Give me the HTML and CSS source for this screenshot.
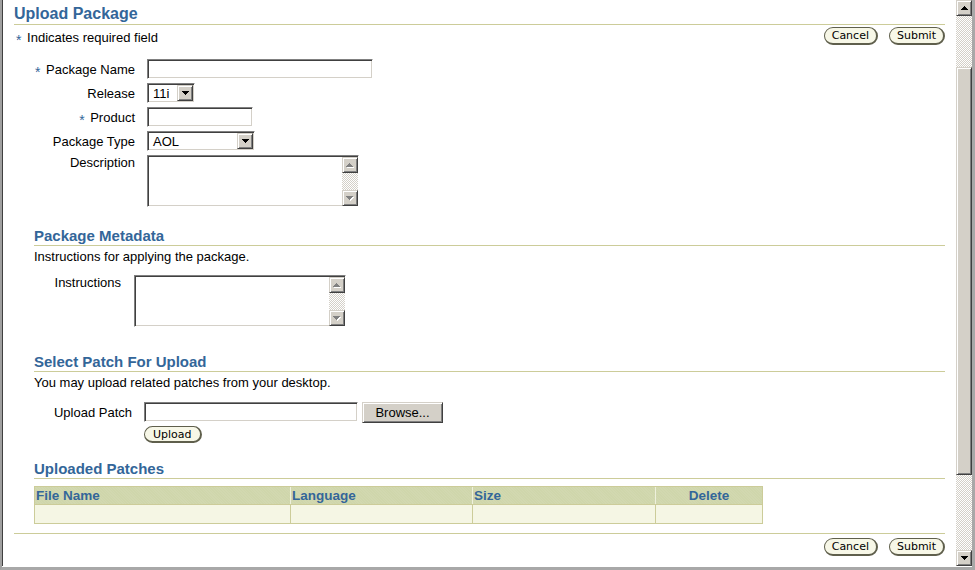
FILE: index.html
```html
<!DOCTYPE html>
<html lang="en">
<head>
<meta charset="utf-8">
<title>Upload Package</title>
<link rel="stylesheet" href="styles.css">
</head>
<body>
<div class="frame">
  <div class="viewport">
    <div class="page">
      <h1 class="page-title">Upload Package</h1>
      <div class="req-row">
        <p class="req-note"><span class="req">*</span> Indicates required field</p>
        <div class="btn-group">
          <button class="pill" type="button">Cancel</button>
          <button class="pill" type="button">Submit</button>
        </div>
      </div>

      <div class="form main-form">
        <label class="lbl"><span class="req">*</span> Package Name</label>
        <input class="field w-name" type="text">

        <label class="lbl">Release</label>
        <div class="select w-release">
          <span class="sel-val">11i</span>
          <span class="raised sel-btn"><svg class="ar" width="7" height="4" viewBox="0 0 7 4"><path d="M0 0h7v1H0zM1 1h5v1H1zM2 2h3v1H2zM3 3h1v1H3z"/></svg></span>
        </div>

        <label class="lbl"><span class="req">*</span> Product</label>
        <input class="field w-product" type="text">

        <label class="lbl">Package Type</label>
        <div class="select w-type">
          <span class="sel-val">AOL</span>
          <span class="raised sel-btn"><svg class="ar" width="7" height="4" viewBox="0 0 7 4"><path d="M0 0h7v1H0zM1 1h5v1H1zM2 2h3v1H2zM3 3h1v1H3z"/></svg></span>
        </div>

        <label class="lbl lbl-top">Description</label>
        <div class="textarea">
          <div class="ta-scroll">
            <span class="raised ta-btn"><svg class="ar-dis" width="8" height="5" viewBox="0 0 8 5"><path fill="#fff" d="M4 1h1v1H4zM3 2h3v1H3zM2 3h5v1H2zM1 4h7v1H1z"/><path fill="#808080" d="M3 0h1v1H3zM2 1h3v1H2zM1 2h5v1H1zM0 3h7v1H0z"/></svg></span>
            <span class="raised ta-btn"><svg class="ar-dis" width="8" height="5" viewBox="0 0 8 5"><path fill="#fff" d="M1 1h7v1H1zM2 2h5v1H2zM3 3h3v1H3zM4 4h1v1H4z"/><path fill="#808080" d="M0 0h7v1H0zM1 1h5v1H1zM2 2h3v1H2zM3 3h1v1H3z"/></svg></span>
          </div>
        </div>
      </div>

      <section class="sub sub-meta">
        <h2 class="sub-title">Package Metadata</h2>
        <p class="sub-desc">Instructions for applying the package.</p>
        <div class="form meta-form">
          <label class="lbl lbl-top">Instructions</label>
          <div class="textarea">
            <div class="ta-scroll">
              <span class="raised ta-btn"><svg class="ar-dis" width="8" height="5" viewBox="0 0 8 5"><path fill="#fff" d="M4 1h1v1H4zM3 2h3v1H3zM2 3h5v1H2zM1 4h7v1H1z"/><path fill="#808080" d="M3 0h1v1H3zM2 1h3v1H2zM1 2h5v1H1zM0 3h7v1H0z"/></svg></span>
              <span class="raised ta-btn"><svg class="ar-dis" width="8" height="5" viewBox="0 0 8 5"><path fill="#fff" d="M1 1h7v1H1zM2 2h5v1H2zM3 3h3v1H3zM4 4h1v1H4z"/><path fill="#808080" d="M0 0h7v1H0zM1 1h5v1H1zM2 2h3v1H2zM3 3h1v1H3z"/></svg></span>
            </div>
          </div>
        </div>
      </section>

      <section class="sub sub-patch">
        <h2 class="sub-title">Select Patch For Upload</h2>
        <p class="sub-desc">You may upload related patches from your desktop.</p>
        <div class="form upload-form">
          <label class="lbl">Upload Patch</label>
          <div class="upload-cell">
            <div class="upload-line">
              <input class="field w-file" type="text">
              <button class="raised win-btn" type="button">Browse...</button>
            </div>
            <button class="pill pill-sm" type="button">Upload</button>
          </div>
        </div>
      </section>

      <section class="sub sub-uploaded">
        <h2 class="sub-title">Uploaded Patches</h2>
        <table class="patches">
          <colgroup>
            <col class="c-file"><col class="c-lang"><col class="c-size"><col class="c-del">
          </colgroup>
          <thead>
            <tr><th>File Name</th><th>Language</th><th>Size</th><th class="center">Delete</th></tr>
          </thead>
          <tbody>
            <tr><td></td><td></td><td></td><td></td></tr>
          </tbody>
        </table>
      </section>

      <div class="page-foot">
        <div class="btn-group">
          <button class="pill" type="button">Cancel</button>
          <button class="pill" type="button">Submit</button>
        </div>
      </div>
    </div>
  </div>

  <div class="vscroll">
    <span class="raised sb-btn"><svg class="ar" width="7" height="4" viewBox="0 0 7 4"><path d="M3 0h1v1H3zM2 1h3v1H2zM1 2h5v1H1zM0 3h7v1H0z"/></svg></span>
    <div class="sb-track"><div class="raised sb-thumb"></div></div>
    <span class="raised sb-btn"><svg class="ar" width="7" height="4" viewBox="0 0 7 4"><path d="M0 0h7v1H0zM1 1h5v1H1zM2 2h3v1H2zM3 3h1v1H3z"/></svg></span>
  </div>
</div>
</body>
</html>
```

FILE: styles.css
```css
html, body {
  margin: 0;
  padding: 0;
  background: #fff;
}
body {
  font-family: "Liberation Sans", Arial, sans-serif;
  font-size: 13px;
  color: #000;
}

/* window frame */
.frame {
  display: flex;
  width: 975px;
  height: 570px;
  box-sizing: border-box;
  border-left: 2px solid #a0a0a0;
  border-right: 3px solid #a8a8a8;
  border-bottom: 3px solid #a8a8a8;
  padding-bottom: 1px;
  background: #fff;
  overflow: hidden;
}
.viewport {
  flex: 1;
  min-width: 0;
  border-left: 1px solid #404040;
  overflow: hidden;
}
.page {
  padding: 0 11px;
}

/* generic raised (Windows classic) */
.raised {
  box-sizing: border-box;
  background: #d4d0c8;
  border: 1px solid;
  border-color: #d4d0c8 #404040 #404040 #d4d0c8;
  box-shadow: inset 1px 1px #fff, inset -1px -1px #808080;
  display: flex;
  align-items: center;
  justify-content: center;
}
.ar, .ar-dis {
  display: block;
  shape-rendering: crispEdges;
}

/* title */
.page-title {
  margin: 0;
  padding-top: 4px;
  font-size: 16px;
  line-height: 20px;
  font-weight: bold;
  color: #336699;
  border-bottom: 1px solid #cccc99;
}
.req-row {
  display: flex;
  justify-content: space-between;
  align-items: flex-start;
  height: 20px;
}
.req-note {
  margin: 5px 0 0 2px;
  line-height: 15px;
}
.req {
  color: #336699;
  font-size: 14px;
  vertical-align: -3px;
  line-height: 0;
  margin-right: 2px;
}
.btn-group {
  display: flex;
  gap: 11px;
  margin-top: 2px;
}

/* pill buttons */
.pill {
  height: 18px;
  box-sizing: border-box;
  margin: 0;
  padding: 0 7px;
  border: 1px solid #5f5f4c;
  border-right-width: 2px;
  border-bottom-width: 2px;
  border-radius: 9px;
  background: #f7f7e7;
  font-family: "DejaVu Sans", Verdana, sans-serif;
  font-size: 11px;
  line-height: 14px;
  color: #000;
}
.pill-sm {
  height: 17px;
  line-height: 13px;
  padding: 0 8px;
  margin-top: 3px;
}

/* forms */
.form {
  display: grid;
  row-gap: 4px;
  justify-items: start;
  align-items: start;
}
.main-form {
  margin-top: 14px;
  grid-template-columns: 121px auto;
  column-gap: 12px;
}
.meta-form {
  margin-top: 10px;
  grid-template-columns: 87px auto;
  column-gap: 13px;
}
.upload-form {
  margin-top: 11px;
  grid-template-columns: 98px auto;
  column-gap: 12px;
}
.lbl {
  justify-self: end;
  text-align: right;
  line-height: 19px;
  padding-top: 1px;
  white-space: nowrap;
}
.lbl-top {
  line-height: 16px;
  padding-top: 0;
}

.field {
  display: block;
  height: 20px;
  box-sizing: border-box;
  margin: 0;
  padding: 0 3px;
  border: 1px solid;
  border-color: #808080 #fff #fff #808080;
  box-shadow: inset 1px 1px #404040, inset -1px -1px #d4d0c8;
  background: #fff;
  font: 13px "Liberation Sans", Arial, sans-serif;
  outline: none;
}
.w-name { width: 226px; }
.w-product { width: 106px; }
.w-file { width: 214px; }

.select {
  display: flex;
  align-items: center;
  height: 20px;
  box-sizing: border-box;
  padding: 1px 1px 1px 5px;
  border: 1px solid;
  border-color: #808080 #fff #fff #808080;
  box-shadow: inset 1px 1px #404040, inset -1px -1px #d4d0c8;
  background: #fff;
}
.w-release { width: 48px; }
.w-type { width: 108px; }
.sel-val {
  flex: 1;
  line-height: 16px;
  padding-top: 1px;
}
.sel-btn {
  width: 16px;
  height: 16px;
  flex: none;
}

.textarea {
  display: flex;
  justify-content: flex-end;
  width: 212px;
  height: 52px;
  box-sizing: border-box;
  padding: 1px 0 0 1px;
  border: 1px solid;
  border-color: #808080 #fff #fff #808080;
  box-shadow: inset 1px 1px #404040, inset -1px -1px #d4d0c8;
  background: #fff;
}
.ta-scroll {
  width: 16px;
  display: flex;
  flex-direction: column;
  justify-content: space-between;
  background: repeating-conic-gradient(#d4d0c8 0 25%, #fff 0 50%) 0 0 / 2px 2px;
}
.ta-btn {
  width: 16px;
  height: 16px;
}

/* upload */
.upload-cell {
  display: flex;
  flex-direction: column;
  align-items: flex-start;
}
.upload-line {
  display: flex;
  align-items: flex-start;
  gap: 4px;
}
.win-btn {
  width: 81px;
  height: 21px;
  margin: 0;
  padding: 0;
  font: 13px "Liberation Sans", Arial, sans-serif;
  color: #000;
}

/* sub sections */
.sub {
  padding-left: 20px;
}
.sub-title {
  margin: 0;
  font-size: 15px;
  line-height: 18px;
  font-weight: bold;
  color: #336699;
  border-bottom: 1px solid #cccc99;
}
.sub-desc {
  margin: 2px 0 0;
  line-height: 17px;
}
.sub-meta { margin-top: 20px; }
.sub-patch { margin-top: 26px; }
.sub-uploaded { margin-top: 17px; }

/* table */
.patches {
  margin-top: 7px;
  width: 729px;
  table-layout: fixed;
  border-collapse: separate;
  border-spacing: 0;
  border: 1px solid #cccc99;
}
.c-file { width: 255px; }
.c-lang { width: 182px; }
.c-size { width: 183px; }
.c-del { width: 107px; }
.patches th {
  height: 17px;
  padding: 0 1px;
  text-align: left;
  font-size: 13.5px;
  line-height: 16px;
  font-weight: bold;
  color: #336699;
  background: #cfd6ab;
  background-image: repeating-linear-gradient(45deg, rgba(255,255,255,0.06) 0 1px, transparent 1px 2px);
  border-left: 1px solid #eef0dc;
}
.patches th.center { text-align: center; }
.patches td {
  height: 18px;
  padding: 0;
  background: #f5f6e4;
  border-top: 1px solid #cccc99;
  border-left: 1px solid #cccc99;
}
.patches th:first-child,
.patches td:first-child {
  border-left: 0;
}

/* footer */
.page-foot {
  margin-top: 9px;
  border-top: 1px solid #cccc99;
  padding-top: 2px;
  display: flex;
  justify-content: flex-end;
}

/* page scrollbar */
.vscroll {
  width: 16px;
  flex: none;
  display: flex;
  flex-direction: column;
  background: repeating-conic-gradient(#d4d0c8 0 25%, #fff 0 50%) 0 0 / 2px 2px;
}
.sb-btn {
  height: 16px;
  flex: none;
}
.sb-track {
  flex: 1;
  padding-top: 51px;
}
.sb-thumb {
  height: 408px;
}
```
